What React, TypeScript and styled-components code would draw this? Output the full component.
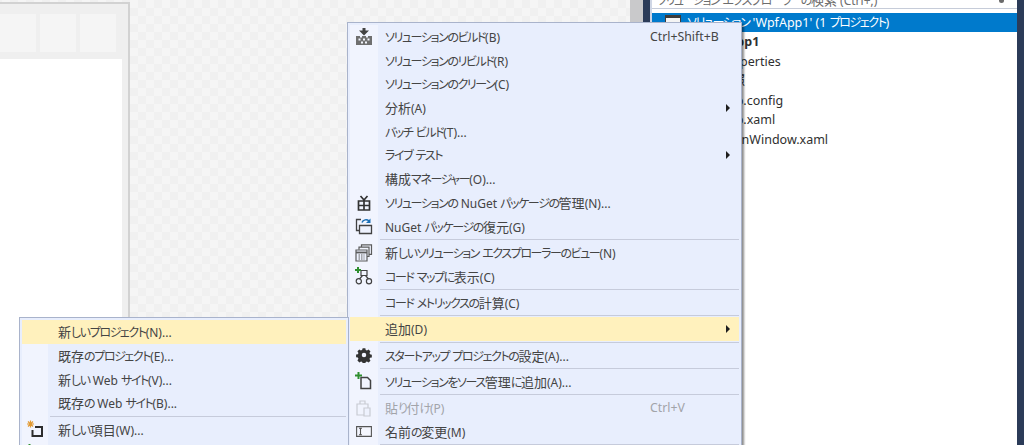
import React from 'react';
import styled, { createGlobalStyle } from 'styled-components';

const GlobalStyle = createGlobalStyle`
  html, body {
    margin: 0;
    padding: 0;
    background: #fff;
  }
  #root {
    width: 1024px;
    height: 445px;
  }
`;

const DARK = '#424242';

const BuildIcon = () => (
  <svg width="18" height="18" viewBox="0 0 18 18">
    <path d="M7.500 0h3v2.500H14L9 7.500 4 2.500h3.500z" fill={DARK} />
    <path d="M1 8h4v1.500h2V8h4v1.500h2V8h4v9H1z" fill="#6f6f6f" />
    <path d="M3.500 10.500h2v2h-2zM8 10.500h2v2H8zM12.500 10.500h2v2h-2zM6 13.500h2v2H6zM10 13.500h2v2h-2z" fill="#f4f6fe" />
  </svg>
);

const NugetIcon = () => (
  <svg width="14" height="16" viewBox="0 0 14 16" fill="none" stroke="#333" strokeWidth="1.700">
    <path d="M1.500 6h11v9h-11zM1.500 10.500h11M7 6v9M3.500 1 7 5l3.500-4" />
  </svg>
);

const RestoreIcon = () => (
  <svg width="18" height="18" viewBox="0 0 18 18" fill="none">
    <path d="M6 2.500H1.500v11H4" stroke={DARK} strokeWidth="1.300" />
    <path d="M4.500 8.500h12v8h-12z" stroke={DARK} strokeWidth="1.300" fill="#eef2fe" />
    <path d="M7 5.500c1-3 5-3.500 7-1.500" stroke="#1b6fb5" strokeWidth="1.500" />
    <path d="M15.500 1.500v4.500H11z" fill="#1b6fb5" />
  </svg>
);

const NewViewIcon = () => (
  <svg width="18" height="18" viewBox="0 0 18 18" fill="none" stroke="#5c5c5c" strokeWidth="1.200">
    <path d="M6.500 3V.8h10v9.500H14M4 5.800V3.200h10v9.300h-2" />
    <path d="M1 6h11v11H1z" fill="#eef2fe" />
    <path d="M1 8.500h11" strokeWidth="1.800" />
    <path d="M3.500 11h6M3.500 13h6M3.500 15h6" strokeDasharray="1.500 1" />
  </svg>
);

const CodeMapIcon = () => (
  <svg width="18" height="18" viewBox="0 0 18 18" fill="none">
    <path d="M6 3.500h6v5H6zM7.500 8.500 4.500 12M10.500 8.500l3 3.500" stroke={DARK} strokeWidth="1.200" />
    <circle cx="3.800" cy="14.200" r="2.600" stroke={DARK} strokeWidth="1.200" />
    <circle cx="14" cy="14.200" r="2.600" stroke={DARK} strokeWidth="1.200" />
    <path d="M2 0h2v2h2v2H4v2H2V4H0V2h2z" fill="#2f8f2f" />
  </svg>
);

const GearIcon = () => (
  <svg width="16" height="16" viewBox="0 0 16 16">
    <path
      fillRule="evenodd"
      fill="#333"
      d="M6.500.5h3l.4 2 1.400.6 1.800-1.100 2.100 2.100-1.100 1.800.6 1.400 2 .4v3l-2 .4-.6 1.400 1.100 1.800-2.100 2.100-1.800-1.100-1.400.6-.4 2h-3l-.4-2-1.400-.6-1.800 1.100L.7 14.100l1.100-1.800-.6-1.400-2-.4v-3l2-.4.6-1.400L.7 3.900l2.100-2.100 1.800 1.100L6 2.300zM8 5.500a2.500 2.500 0 1 0 0 5 2.500 2.500 0 0 0 0-5z"
      transform="translate(.8 .8) scale(.9)"
    />
  </svg>
);

const AddSourceIcon = () => (
  <svg width="18" height="18" viewBox="0 0 18 18" fill="none">
    <path d="M6 5.500h6.500l3 3v8H6z" stroke={DARK} strokeWidth="1.500" />
    <path d="M2.500 0h2v2.500H7v2H4.500V7h-2V4.500H0v-2h2.500z" fill="#2f8f2f" />
  </svg>
);

const PasteIcon = () => (
  <svg width="16" height="18" viewBox="0 0 16 18" fill="none" stroke="#c9cbd3" strokeWidth="1.200">
    <path d="M1 5h11v11H1z" />
    <path d="M4 5V2h5v3" />
    <path d="M8 9h6v8H8z" fill="#eef2fe" />
  </svg>
);

const RenameIcon = () => (
  <svg width="16" height="11" viewBox="0 0 16 11" fill="none" stroke="#555" strokeWidth="1.100">
    <path d="M.6.600h14.800v9.800H.6z" fill="#f4f6fe" />
    <path d="M4.500 2.500v6M3 2.200h3M3 8.800h3" />
  </svg>
);

const NewItemIcon = () => (
  <svg width="18" height="18" viewBox="0 0 18 18" fill="none">
    <path d="M9 7h7v9H6.500v-6" stroke="#2d2d2d" strokeWidth="2" />
    <path d="M1 4h7M4.500.5v7M2 1.500l5 5M7 1.500l-5 5" stroke="#e29a33" strokeWidth="1.200" />
  </svg>
);

const AddExistingIcon = () => (
  <svg width="18" height="18" viewBox="0 0 18 18">
    <path d="M2.500 0h2v2.500H7v2H4.500V7h-2V4.500H0v-2h2.500z" fill="#2f8f2f" />
  </svg>
);

const SolutionIcon = () => (
  <svg width="16" height="16" viewBox="0 0 16 16">
    <path d="M0 0h16v16H0z" fill="#3c3c3c" />
    <path d="M1 3h14v12H1z" fill="#f4f4f4" />
  </svg>
);

// the reference font has narrow kana and wide kanji, so runs are sized separately
const JpText = ({ text }: { text: string }) => (
  <>
    {text.split(/([\u3040-\u30ff]+|[\u4e00-\u9fff]+)/).map((run, i) => {
      if (!run) return null;
      if (/[\u3040-\u30ff]/.test(run)) return <KanaRun key={i}>{run}</KanaRun>;
      if (/[\u4e00-\u9fff]/.test(run)) return <KanjiRun key={i}>{run}</KanjiRun>;
      return <React.Fragment key={i}>{run}</React.Fragment>;
    })}
  </>
);

type MenuEntry =
  | { sep: true }
  | {
      sep?: false;
      label: string;
      icon?: React.ReactNode;
      shortcut?: string;
      arrow?: boolean;
      active?: boolean;
      disabled?: boolean;
    };

const mainEntries: MenuEntry[] = [
  { label: 'ソリューションのビルド(B)', icon: <BuildIcon />, shortcut: 'Ctrl+Shift+B' },
  { label: 'ソリューションのリビルド(R)' },
  { label: 'ソリューションのクリーン(C)' },
  { label: '分析(A)', arrow: true },
  { label: 'バッチ ビルド(T)...' },
  { label: 'ライブ テスト', arrow: true },
  { label: '構成マネージャー(O)...' },
  { label: 'ソリューションの NuGet パッケージの管理(N)...', icon: <NugetIcon /> },
  { label: 'NuGet パッケージの復元(G)', icon: <RestoreIcon /> },
  { sep: true },
  { label: '新しいソリューション エクスプローラーのビュー(N)', icon: <NewViewIcon /> },
  { label: 'コード マップに表示(C)', icon: <CodeMapIcon /> },
  { sep: true },
  { label: 'コード メトリックスの計算(C)' },
  { sep: true },
  { label: '追加(D)', arrow: true, active: true },
  { sep: true },
  { label: 'スタートアップ プロジェクトの設定(A)...', icon: <GearIcon /> },
  { sep: true },
  { label: 'ソリューションをソース管理に追加(A)...', icon: <AddSourceIcon /> },
  { sep: true },
  { label: '貼り付け(P)', icon: <PasteIcon />, shortcut: 'Ctrl+V', disabled: true },
  { label: '名前の変更(M)', icon: <RenameIcon /> },
  { sep: true },
];

const subEntries: MenuEntry[] = [
  { label: '新しいプロジェクト(N)...', active: true },
  { label: '既存のプロジェクト(E)...' },
  { label: '新しい Web サイト(V)...' },
  { label: '既存の Web サイト(B)...' },
  { sep: true },
  { label: '新しい項目(W)...', icon: <NewItemIcon /> },
  { label: '既存の項目(G)...', icon: <AddExistingIcon /> },
];

const treeItems = [
  { label: 'WpfApp1', depth: 0, bold: true },
  { label: 'Properties', depth: 1 },
  { label: '参照', depth: 1 },
  { label: 'App.config', depth: 1 },
  { label: 'App.xaml', depth: 1 },
  { label: 'MainWindow.xaml', depth: 1 },
];

const renderEntries = (entries: MenuEntry[], iconWidth: number) =>
  entries.map((entry, i) =>
    entry.sep ? (
      <Separator key={i} $indent={iconWidth} />
    ) : (
      <Row key={i} $active={entry.active} $disabled={entry.disabled}>
        <IconSlot $width={iconWidth} $active={entry.active}>
          {entry.icon}
        </IconSlot>
        <RowLabel $indent={iconWidth}>
          <JpText text={entry.label} />
        </RowLabel>
        {entry.shortcut && <Shortcut>{entry.shortcut}</Shortcut>}
        {entry.arrow && <Arrow />}
      </Row>
    )
  );

const App = () => (
  <>
    <GlobalStyle />
    <Page>
      <Designer>
        <FormWindow>
          <TitleBar>
            <CaptionTile />
            <CaptionTile />
            <CaptionTile />
          </TitleBar>
          <FormBody>
            <FormContent />
          </FormBody>
        </FormWindow>
      </Designer>
      <Splitter />
      <Edge />
      <Explorer>
        <SearchBox>
          <SearchText>
            <JpText text="ソリューション エクスプローラーの検索 (Ctrl+;)" />
          </SearchText>
          <SearchGlyph />
        </SearchBox>
        <Tree>
          <SolutionRow>
            <SolutionIcon />
            <span>
              <JpText text="ソリューション 'WpfApp1' (1 プロジェクト)" />
            </span>
          </SolutionRow>
          {treeItems.map((item) => (
            <TreeRow key={item.label} $depth={item.depth} $bold={item.bold}>
              {item.label}
            </TreeRow>
          ))}
        </Tree>
      </Explorer>
      <Edge />

      <ContextMenu>{renderEntries(mainEntries, 28)}</ContextMenu>
      <SubMenu>{renderEntries(subEntries, 26)}</SubMenu>
    </Page>
  </>
);

const Page = styled.div`
  position: relative;
  display: flex;
  width: 1024px;
  height: 445px;
  overflow: hidden;
  font-family: "Noto Sans", "Noto Sans CJK JP", sans-serif;
`;

const KanaRun = styled.span`
  font-size: 12px;
  letter-spacing: -1.4px;
  font-feature-settings: "palt";
`;

const KanjiRun = styled.span`
  font-size: 13px;
`;

const Designer = styled.div`
  flex: 0 0 630px;
  padding-top: 2px;
  box-sizing: border-box;
  background-color: #f5f5f5;
  background-image: conic-gradient(#f0f0f0 25%, transparent 0 50%, #f0f0f0 0 75%, transparent 0);
  background-size: 16px 16px;
  background-position: 2px 0;
`;

const FormWindow = styled.div`
  width: 130px;
  height: 100%;
  box-sizing: border-box;
  border-top: 2px solid #d2d2d2;
  border-right: 2px solid #d2d2d2;
  background: #efefef;
  display: flex;
  flex-direction: column;
`;

const TitleBar = styled.div`
  flex: 0 0 55px;
  box-sizing: border-box;
  display: flex;
  justify-content: flex-end;
  gap: 4px;
  padding: 10px 12px 7px 0;
`;

const CaptionTile = styled.div`
  width: 38px;
  background: #f5f5f5;
`;

const FormBody = styled.div`
  flex: 1;
  padding-right: 6px;
`;

const FormContent = styled.div`
  height: 100%;
  background: #fff;
`;

const Splitter = styled.div`
  flex: 0 0 13px;
  background: #c9c9cb;
`;

const Edge = styled.div`
  flex: 0 0 7px;
  background: #2b3b58;
`;

const Explorer = styled.div`
  flex: 1;
  box-sizing: border-box;
  border-left: 2px solid #cfd6e5;
  background: #fff;
  display: flex;
  flex-direction: column;
  min-width: 0;
`;

const SearchBox = styled.div`
  flex: 0 0 9px;
  box-sizing: border-box;
  border-bottom: 1px solid #c6ccd9;
  overflow: hidden;
  display: flex;
  justify-content: space-between;
  padding: 0 13px 0 5px;
`;

const SearchText = styled.span`
  margin-top: -8px;
  font-size: 12px;
  line-height: 16px;
  color: #6d6d6d;
  white-space: nowrap;
`;

const SearchGlyph = styled.span`
  width: 5px;
  height: 3px;
  background: #6a6a6a;
  border-radius: 0 0 3px 3px;
`;

const Tree = styled.div`
  padding-top: 4px;
  display: flex;
  flex-direction: column;
`;

const SolutionRow = styled.div`
  height: 19px;
  background: #007acc;
  color: #fff;
  font-size: 12.5px;
  line-height: 19px;
  display: flex;
  align-items: center;
  gap: 6px;
  padding-left: 13px;
  white-space: nowrap;
`;

const TreeRow = styled.div<{ $depth: number; $bold?: boolean }>`
  height: 19.5px;
  line-height: 19.5px;
  font-size: 12.5px;
  color: #2f2f2f;
  font-weight: ${(p) => (p.$bold ? 700 : 400)};
  padding-left: ${(p) => 51 + p.$depth * 17}px;
  white-space: nowrap;
  &:first-of-type {
    margin-top: 3px;
  }
`;

const MenuPanel = styled.div`
  position: absolute;
  box-sizing: border-box;
  background: #e8eefd;
  border: 1px solid #a9b3cb;
  padding: 2px;
  display: flex;
  flex-direction: column;
`;

const ContextMenu = styled(MenuPanel)`
  left: 347px;
  top: 22px;
  width: 395px;
  height: 440px;
  box-shadow: 2px 2px 2px rgba(0, 0, 0, 0.45);
  z-index: 1;
`;

const SubMenu = styled(MenuPanel)`
  left: 19px;
  top: 317px;
  width: 330px;
  height: 160px;
  z-index: 2;
`;

const Row = styled.div<{ $active?: boolean; $disabled?: boolean }>`
  flex: 0 0 23.7px;
  position: relative;
  display: flex;
  align-items: center;
  font-size: 12px;
  color: ${(p) => (p.$disabled ? '#a2a4a9' : '#444')};
  background: ${(p) => (p.$active ? '#fff1bd' : 'transparent')};
  white-space: nowrap;
`;

const IconSlot = styled.div<{ $width: number; $active?: boolean }>`
  flex: 0 0 ${(p) => p.$width}px;
  align-self: stretch;
  display: flex;
  align-items: center;
  justify-content: center;
  background: ${(p) => (p.$active ? 'transparent' : '#f1f4fe')};
`;

const RowLabel = styled.span<{ $indent: number }>`
  margin-left: ${(p) => (p.$indent === 28 ? 7 : 10)}px;
`;

const Shortcut = styled.span`
  position: absolute;
  left: 300px;
  font-size: 12.3px;
`;

const Arrow = styled.span`
  position: absolute;
  right: 9px;
  width: 0;
  height: 0;
  border-top: 4px solid transparent;
  border-bottom: 4px solid transparent;
  border-left: 4px solid #1e1e1e;
`;

const Separator = styled.div<{ $indent: number }>`
  flex: 0 0 2.6px;
  box-sizing: border-box;
  display: flex;
  align-items: center;
  background: linear-gradient(to right, #f1f4fe ${(p) => p.$indent}px, transparent 0);
  &::after {
    content: '';
    flex: 1;
    height: 1px;
    margin-left: ${(p) => p.$indent + 2}px;
    background: #c6cbdb;
  }
`;

export default App;
